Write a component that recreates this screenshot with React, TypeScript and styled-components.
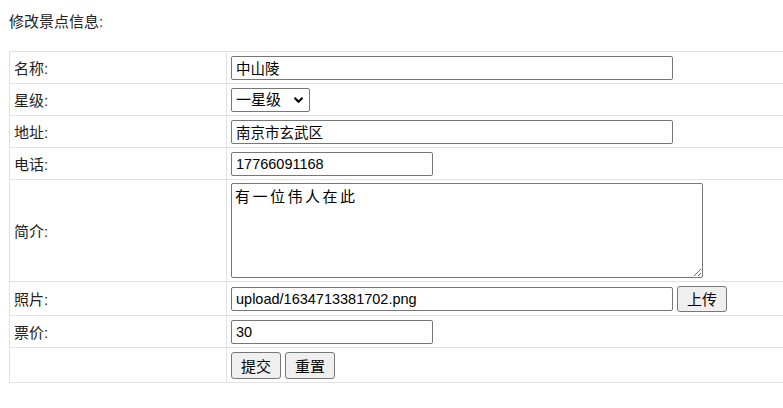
import React from 'react';
import styled, { createGlobalStyle } from 'styled-components';

const GlobalStyle = createGlobalStyle`
    html, body {
        margin: 0;
        padding: 0;
        overflow: hidden;
        background: #fff;
    }
    body {
        font-family: "Liberation Sans", "Noto Sans CJK SC", sans-serif;
        font-size: 15px;
        color: #222;
    }
`;

const PageWrapper = styled.div`
    padding: 12px 9px 0 9px;
`;

const PageTitle = styled.div`
    font-size: 15px;
    line-height: 20px;
    height: 39px;
`;

const FormTable = styled.table`
    width: 820px;
    border-collapse: collapse;
    border-spacing: 0;

    td {
        border: 1px solid #dfe1e5;
        vertical-align: middle;
    }
`;

interface RowProps {
    $height: number;
}

const Row = styled.tr<RowProps>`
    height: ${(props) => props.$height}px;
`;

const LabelCell = styled.td`
    width: 208px;
    padding: 0 4px;
    font-size: 15px;
`;

const FieldCell = styled.td`
    padding: 0 4px;
`;

const FieldLine = styled.div`
    display: flex;
    align-items: center;
    gap: 4px;
`;

interface TextInputProps {
    $width: number;
}

const TextInput = styled.input<TextInputProps>`
    box-sizing: border-box;
    width: ${(props) => props.$width}px;
    height: 24px;
    border: 1px solid #767676;
    border-radius: 2px;
    padding: 1px 4px;
    font-family: "Liberation Sans", "Noto Sans CJK SC", sans-serif;
    font-size: 14.5px;
    color: #000;
    background: #fff;
    outline: none;
`;

const SelectWrap = styled.div`
    position: relative;
    display: inline-block;
    width: 79px;
    height: 24px;
`;

const StarSelect = styled.select`
    appearance: none;
    box-sizing: border-box;
    width: 79px;
    height: 24px;
    border: 1px solid #767676;
    border-radius: 2px;
    padding: 0 0 0 4px;
    font-family: "Liberation Sans", "Noto Sans CJK SC", sans-serif;
    font-size: 15px;
    color: #000;
    background: #fff;
    outline: none;
`;

const Chevron = styled.svg`
    position: absolute;
    right: 6px;
    top: 8px;
    pointer-events: none;
`;

const IntroArea = styled.textarea`
    box-sizing: border-box;
    display: block;
    width: 472px;
    height: 95px;
    border: 1px solid #767676;
    border-radius: 2px;
    padding: 2px 3px;
    font-family: "Noto Sans CJK SC", sans-serif;
    font-size: 15px;
    line-height: 20px;
    letter-spacing: 2.5px;
    color: #000;
    resize: both;
    outline: none;
`;

interface ButtonProps {
    $height: number;
}

const PlainButton = styled.button<ButtonProps>`
    box-sizing: border-box;
    width: 50px;
    height: ${(props) => props.$height}px;
    border: 1px solid #767676;
    border-radius: 3px;
    background: #efefef;
    font-family: "Noto Sans CJK SC", sans-serif;
    font-size: 15px;
    color: #000;
    padding: 0;
`;

const App: React.FC = () => {
    return (
        <>
            <GlobalStyle />
            <PageWrapper>
                <PageTitle>修改景点信息:</PageTitle>
                <FormTable>
                    <tbody>
                        <Row $height={32}>
                            <LabelCell>名称:</LabelCell>
                            <FieldCell>
                                <TextInput $width={442} defaultValue="中山陵" />
                            </FieldCell>
                        </Row>
                        <Row $height={32}>
                            <LabelCell>星级:</LabelCell>
                            <FieldCell>
                                <FieldLine>
                                    <SelectWrap>
                                        <StarSelect defaultValue="1">
                                            <option value="1">一星级</option>
                                            <option value="2">二星级</option>
                                            <option value="3">三星级</option>
                                            <option value="4">四星级</option>
                                            <option value="5">五星级</option>
                                        </StarSelect>
                                        <Chevron width="11" height="8" viewBox="0 0 11 8">
                                            <path d="M1.5 1.8 L5.5 5.8 L9.5 1.8" fill="none" stroke="#000" strokeWidth="2" />
                                        </Chevron>
                                    </SelectWrap>
                                </FieldLine>
                            </FieldCell>
                        </Row>
                        <Row $height={32}>
                            <LabelCell>地址:</LabelCell>
                            <FieldCell>
                                <TextInput $width={442} defaultValue="南京市玄武区" />
                            </FieldCell>
                        </Row>
                        <Row $height={32}>
                            <LabelCell>电话:</LabelCell>
                            <FieldCell>
                                <TextInput $width={202} defaultValue="17766091168" />
                            </FieldCell>
                        </Row>
                        <Row $height={102}>
                            <LabelCell>简介:</LabelCell>
                            <FieldCell>
                                <IntroArea defaultValue="有一位伟人在此" />
                            </FieldCell>
                        </Row>
                        <Row $height={34}>
                            <LabelCell>照片:</LabelCell>
                            <FieldCell>
                                <FieldLine>
                                    <TextInput $width={442} defaultValue="upload/1634713381702.png" />
                                    <PlainButton $height={26}>上传</PlainButton>
                                </FieldLine>
                            </FieldCell>
                        </Row>
                        <Row $height={32}>
                            <LabelCell>票价:</LabelCell>
                            <FieldCell>
                                <TextInput $width={202} defaultValue="30" />
                            </FieldCell>
                        </Row>
                        <Row $height={35}>
                            <LabelCell />
                            <FieldCell>
                                <FieldLine>
                                    <PlainButton $height={27}>提交</PlainButton>
                                    <PlainButton $height={27}>重置</PlainButton>
                                </FieldLine>
                            </FieldCell>
                        </Row>
                    </tbody>
                </FormTable>
            </PageWrapper>
        </>
    );
};

export default App;
